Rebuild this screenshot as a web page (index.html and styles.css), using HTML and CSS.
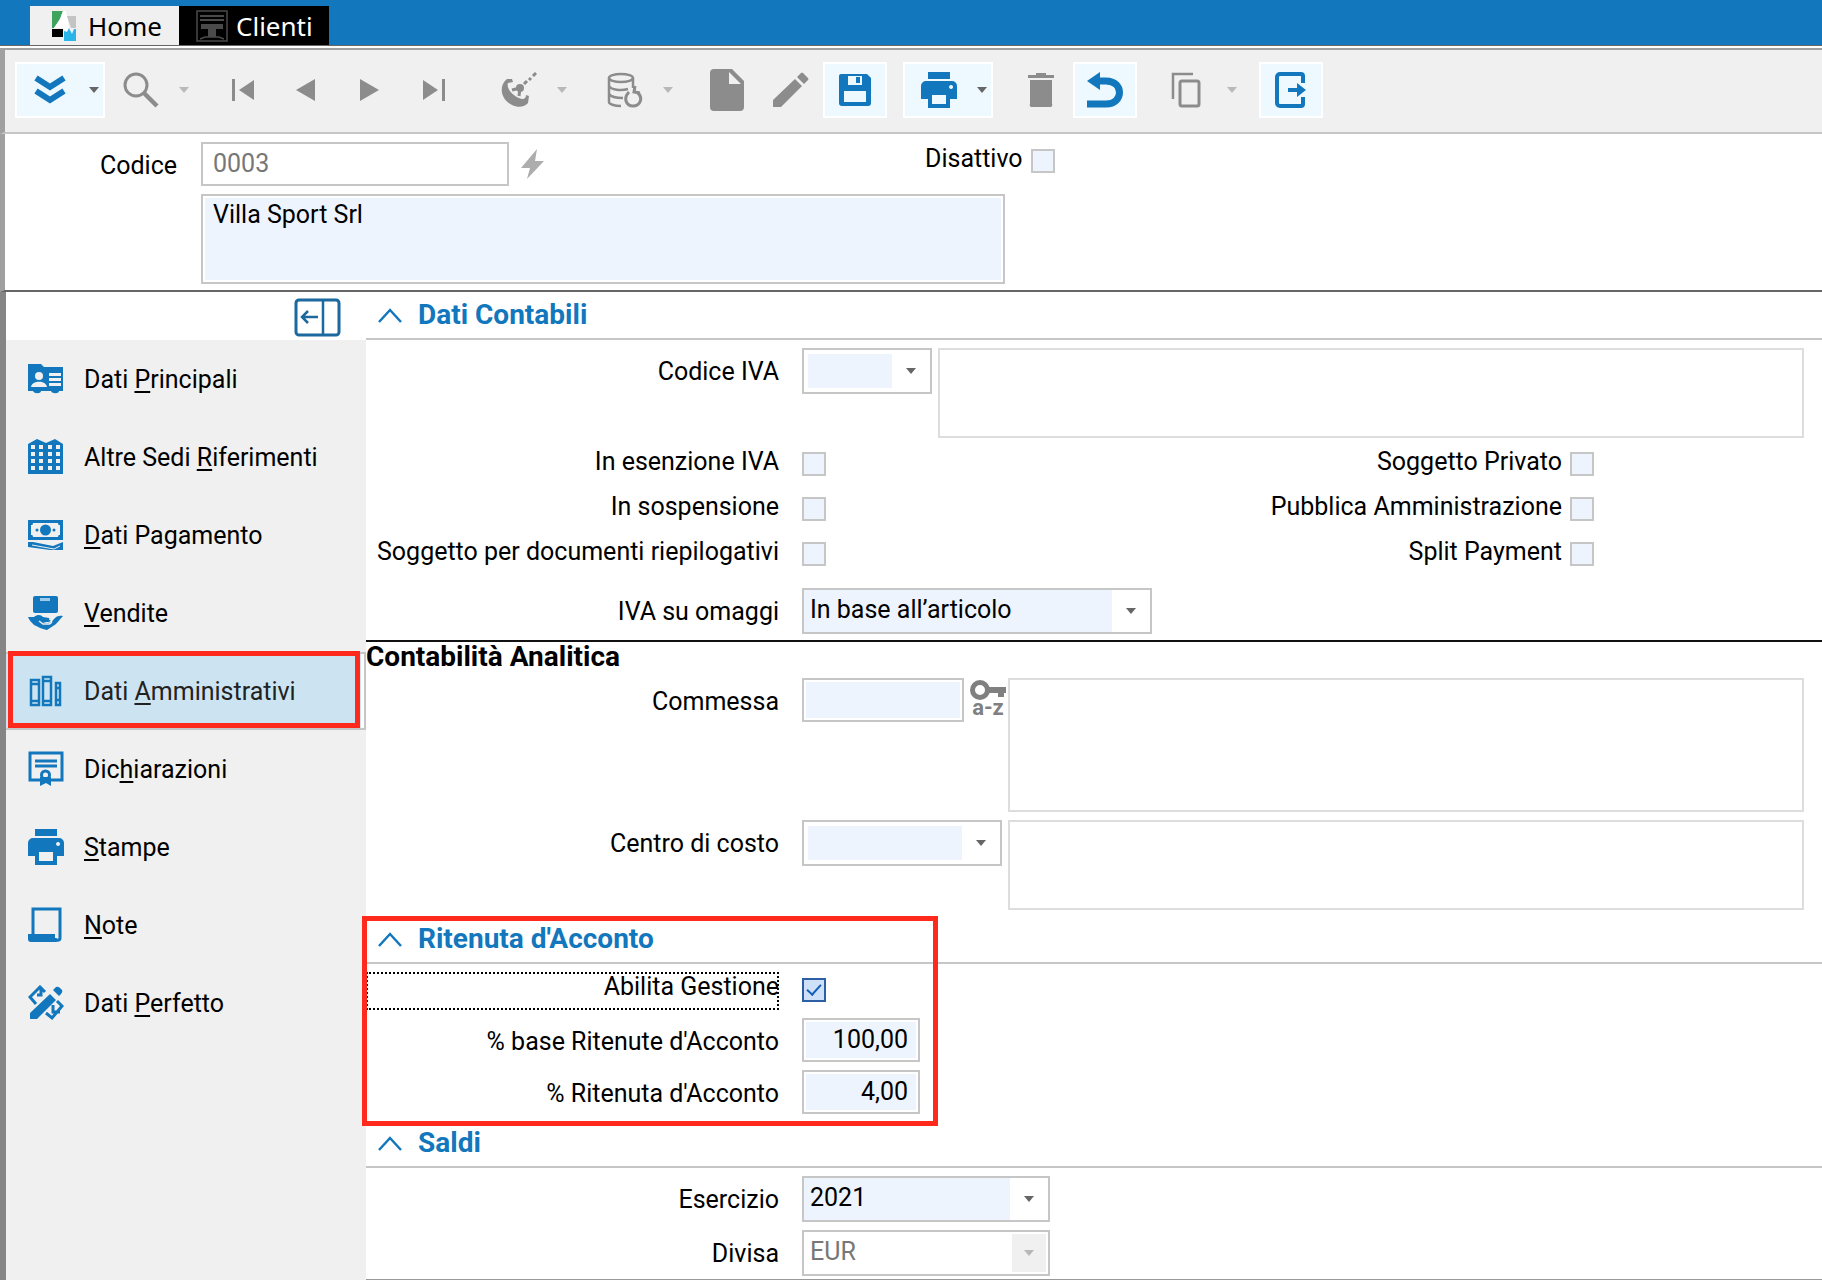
FILE: index.html
```html
<!DOCTYPE html>
<html lang="it">
<head>
  <meta charset="UTF-8">
  <title>Clienti</title>
  <meta name="viewport" content="width=device-width, initial-scale=1.0">
  <link rel="stylesheet" href="styles.css">
</head>
<body>

  <nav class="tabs">
    <a class="tab" href="#home">
      <svg width="24" height="30" viewBox="0 0 24 30">
        <path fill="#3da35d" d="M0 0h11L8 8 2 17H0z"/>
        <path fill="#c4c4c4" d="M15 5h9v12h-5z"/>
        <path fill="#fff" d="M11 0h3l3 17 4 5-4-3-4 1-2-3H2L8 8z"/>
        <path fill="#000" d="M0 18h11v8H0z"/>
        <path fill="#29b5e8" d="M12 20l3 1 2-4 3 6 2-5h2v12H12z"/>
      </svg>
      Home
    </a>
    <a class="tab active" href="#clienti">
      <svg width="32" height="32" viewBox="0 0 32 32" fill="none" stroke="#4a4a4a" stroke-width="1.5">
        <path d="M1 1h30v30H1z"/>
        <path d="M4 6h24M4 10h24" stroke-width="2"/>
        <path d="M5 14h22v5h-7v8h-8v-8H5z" fill="#4a4a4a" stroke="none"/>
        <path d="M4 29l5-2h14l5 2"/>
      </svg>
      Clienti
    </a>
  </nav>

  <div class="toolbar">
    <div class="tool-group">
      <button class="tool wide on" aria-label="Azioni">
        <svg width="34" height="30" viewBox="0 0 34 30" fill="none" stroke="currentColor" stroke-width="6"><path d="M3 3l14 9 14-9M3 16l14 9 14-9"/></svg>
        <span class="caret"></span>
      </button>
      <button class="tool wide" aria-label="Cerca">
        <svg width="36" height="36" viewBox="0 0 36 36" fill="none" stroke="currentColor"><circle cx="13" cy="13" r="11" stroke-width="3"/><path d="M21 21l13 13" stroke-width="4.5"/></svg>
        <span class="caret"></span>
      </button>
    </div>
    <div class="tool-group">
      <button class="tool" aria-label="Primo"><svg width="24" height="24" viewBox="0 0 24 24" fill="currentColor"><path d="M1 1h3v22H1zM23 2v20L8 12z"/></svg></button>
      <button class="tool" aria-label="Precedente"><svg width="24" height="24" viewBox="0 0 24 24" fill="currentColor"><path d="M20 1v22L1 12z"/></svg></button>
      <button class="tool" aria-label="Successivo"><svg width="24" height="24" viewBox="0 0 24 24" fill="currentColor"><path d="M1 1v22l19-11z"/></svg></button>
      <button class="tool" aria-label="Ultimo"><svg width="24" height="24" viewBox="0 0 24 24" fill="currentColor"><path d="M19 1h3v22h-3zM0 2v20l15-10z"/></svg></button>
    </div>
    <div class="tool-group">
      <button class="tool wide" aria-label="Parabola">
        <svg width="36" height="36" viewBox="0 0 36 36" fill="currentColor">
          <path d="M6 7C-3 14 0 28 11 33c6 3 13 2 16-2l1-7-3-1c0 4-3 5-7 3C11 23 5 16 7 11l5-1-1-3z"/>
          <circle cx="19" cy="16" r="4"/>
          <path d="M19 16l-8 2M19 16l-1 8M23 12l3-3M28 8l2-2M32 4l3-3" fill="none" stroke="currentColor" stroke-width="3"/>
        </svg>
        <span class="caret"></span>
      </button>
    </div>
    <div class="tool-group">
      <button class="tool wide" aria-label="Archivio">
        <svg width="36" height="36" viewBox="0 0 36 36" fill="none" stroke="currentColor" stroke-width="2.5">
          <ellipse cx="14" cy="6" rx="12" ry="4"/>
          <path d="M2 6v24c0 2 5 4 12 4M26 6v10M2 14c2 4 12 5 19 3M2 22c2 3 8 4 14 4"/>
          <path d="M22 20c-6 6-3 14 4 14s11-8 4-14M28 14l-1 6 6 1" stroke-width="3"/>
        </svg>
        <span class="caret"></span>
      </button>
    </div>
    <div class="tool-group">
      <button class="tool" aria-label="Nuovo"><svg width="34" height="42" viewBox="0 0 34 42" fill="currentColor"><path fill-rule="evenodd" d="M4 0h18l12 12v26a4 4 0 0 1-4 4H4a4 4 0 0 1-4-4V4a4 4 0 0 1 4-4zM19 3v12h12z"/></svg></button>
      <button class="tool" aria-label="Modifica"><svg width="36" height="36" viewBox="0 0 36 36" fill="currentColor"><path d="M0 28L22 7l7 7L8 35H0zM24 5l4-4q1-1 2 0l5 5q1 1 0 2l-4 4z"/></svg></button>
      <button class="tool on" aria-label="Salva"><svg width="34" height="34" viewBox="0 0 34 34" fill="currentColor"><path fill-rule="evenodd" d="M3 1h26l4 4v25a3 3 0 0 1-3 3H4a3 3 0 0 1-3-3V3a2 2 0 0 1 2-2zM10 3v9h14V3zM6 18v11h22V18zM18 4h4v6h-4z"/></svg></button>
    </div>
    <div class="tool-group">
      <button class="tool wide on" aria-label="Stampa">
        <svg width="36" height="36" viewBox="0 0 36 36" fill="currentColor"><path d="M7 0h22v7H7z"/><path fill-rule="evenodd" d="M5 9h26a5 5 0 0 1 5 5v13h-7v9H7v-9H0V14a5 5 0 0 1 5-5zM11 23v9h14v-9zM30 13a2 2 0 1 0 .1 0z"/></svg>
        <span class="caret"></span>
      </button>
    </div>
    <div class="tool-group">
      <button class="tool" aria-label="Elimina"><svg width="26" height="34" viewBox="0 0 26 34" fill="currentColor"><path d="M0 2h8V0h10v2h8v3H0zM2 7h22v24a2 2 0 0 1-2 3H4a2 2 0 0 1-2-3z"/></svg></button>
      <button class="tool on" aria-label="Annulla"><svg width="36" height="36" viewBox="0 0 36 36"><path fill="currentColor" d="M0 9L13 0v18z"/><path d="M11 9h8c18 0 18 23 0 23H0" fill="none" stroke="currentColor" stroke-width="7"/></svg></button>
    </div>
    <div class="tool-group">
      <button class="tool wide" aria-label="Copia">
        <svg width="30" height="36" viewBox="0 0 30 36" fill="none" stroke="currentColor" stroke-width="3"><path d="M22 2H2v25" stroke-width="2.5"/><rect x="9" y="9" width="19" height="25" rx="2"/></svg>
        <span class="caret"></span>
      </button>
    </div>
    <div class="tool-group">
      <button class="tool on" aria-label="Esci"><svg width="32" height="36" viewBox="0 0 32 36" fill="none" stroke="currentColor" stroke-width="4"><path d="M28 11V4a2 2 0 0 0-2-2H5a3 3 0 0 0-3 3v26a3 3 0 0 0 3 3h21a2 2 0 0 0 2-2v-7"/><path d="M13 18h12"/><path d="M22 11l9 7-9 7z" fill="currentColor" stroke="none"/></svg></button>
    </div>
  </div>

  <div class="customer">
    <label class="customer-label" for="codice">Codice</label>
    <div class="customer-fields">
      <div class="code-row">
        <input class="field code" type="text" id="codice" value="0003">
        <svg class="bolt" width="24" height="30" viewBox="0 0 24 30"><path fill="#adadad" d="M16 0L0 19h9L6 30 23 12h-9z"/></svg>
        <label class="check-label" for="disattivo">Disattivo</label>
        <input type="checkbox" id="disattivo">
      </div>
      <textarea class="field name" aria-label="Ragione sociale">Villa Sport Srl</textarea>
    </div>
  </div>

  <div class="content">
    <aside class="sidebar">
      <button class="collapse" aria-label="Comprimi menu">
        <svg width="48" height="40" viewBox="0 0 48 40" fill="none" stroke="#1b699e" stroke-width="3"><rect x="2" y="2" width="43" height="35" rx="3"/><path d="M29 2v35M24 19H8M14 13l-6 6 6 6" stroke-width="2.5"/></svg>
      </button>
      <a class="item" href="#principali">
        <svg width="36" height="36" viewBox="0 0 36 36"><path fill="currentColor" d="M0 3h13l3 3h19v24h-4c0 3-7 3-8 0H13c0 3-7 3-8 0H0z"/><g fill="#f0f0f0"><circle cx="11" cy="15" r="4"/><path d="M3 26c1-7 15-7 16 0zM21 12h12v3H21zM21 17h12v3H21zM21 22h12v3H21z"/></g></svg>
        <span>Dati <u>P</u>rincipali</span>
      </a>
      <a class="item" href="#sedi">
        <svg width="36" height="36" viewBox="0 0 36 36"><path fill="currentColor" d="M0 5l9-5 9 4 9-4 8 5v30H0z"/><path d="M5 6v28M13 6v28M22 6v28M30 6v28" stroke="#f0f0f0" stroke-width="4" stroke-dasharray="4 3"/></svg>
        <span>Altre Sedi <u>R</u>iferimenti</span>
      </a>
      <a class="item" href="#pagamento">
        <svg width="36" height="36" viewBox="0 0 36 36"><path fill="currentColor" fill-rule="evenodd" d="M0 3h35v20H0zM5 6c0 2-1 2-2 2v10c1 0 2 0 2 2h25c0-2 1-2 2-2V8c-1 0-2 0-2-2z"/><circle cx="17.5" cy="13" r="5.5" fill="currentColor"/><circle cx="9" cy="13" r="1.5" fill="currentColor"/><circle cx="26" cy="13" r="1.5" fill="currentColor"/><path fill="currentColor" d="M0 25h5l20 4 10-4v8H22L0 30z"/><path d="M4 28l22 4 6-3" stroke="#f0f0f0" fill="none"/></svg>
        <span><u>D</u>ati Pagamento</span>
      </a>
      <a class="item" href="#vendite">
        <svg width="36" height="36" viewBox="0 0 36 36"><rect x="5" y="1" width="25" height="17" rx="2" fill="currentColor"/><path fill="#9fcbe6" d="M12 3h10v3H12z"/><path fill="currentColor" d="M0 22h6c4-3 7-2 9 0l6 1c3 1 2 4-1 4h-5c5 2 8 1 11-3 2-3 6-4 9-3-4 4-6 8-10 10l-6 4c-6-1-8-3-13-5-2-2-5-5-6-8z"/><path d="M11 26l4 3h6c4-1 3-5 0-5" fill="none" stroke="#f0f0f0" stroke-width="1.5"/></svg>
        <span><u>V</u>endite</span>
      </a>
      <a class="item active" href="#amministrativi">
        <svg width="36" height="36" viewBox="0 0 36 36" fill="none" stroke="currentColor" stroke-width="2.5"><path d="M3 7h8v25H3zM15 4h8v28h-8zM28 10h4v22h-4z"/><path d="M3 11h8M3 28h8M15 8h8M15 28h8M28 15h4M28 27h4"/></svg>
        <span>Dati <u>A</u>mministrativi</span>
      </a>
      <a class="item" href="#dichiarazioni">
        <svg width="36" height="36" viewBox="0 0 36 36" fill="none" stroke="currentColor" stroke-width="3"><path d="M12 29H2V2h32v27H23M7 10h22M7 15h22"/><circle cx="17.5" cy="24" r="4"/><path fill="currentColor" stroke="none" d="M12 26h11v9l-5-3-6 3z"/><circle cx="17.5" cy="24" r="2" fill="#f0f0f0" stroke="none"/></svg>
        <span>Dic<u>h</u>iarazioni</span>
      </a>
      <a class="item" href="#stampe">
        <svg width="36" height="36" viewBox="0 0 36 36" fill="currentColor"><path d="M7 0h22v7H7z"/><path fill-rule="evenodd" d="M5 9h26a5 5 0 0 1 5 5v13h-7v9H7v-9H0V14a5 5 0 0 1 5-5zM11 23v9h14v-9zM30 13a2 2 0 1 0 .1 0z"/></svg>
        <span><u>S</u>tampe</span>
      </a>
      <a class="item" href="#note">
        <svg width="36" height="36" viewBox="0 0 36 36"><path d="M5 27V2h27v29c0 3-5 3-5 0" fill="none" stroke="currentColor" stroke-width="3"/><path fill="currentColor" d="M0 27h27v4l2 4H3c-2 0-3-1-3-3z"/></svg>
        <span><u>N</u>ote</span>
      </a>
      <a class="item" href="#perfetto">
        <svg width="36" height="36" viewBox="0 0 36 36"><path fill="currentColor" d="M2 28L22 9l6 6L9 34H2zM25 5l3-3q2-1 4 1l2 2q1 2-1 4l-2 2z"/><path d="M8 19l-6-7L12 2l5 5M13 2v8H9M25 20v7h7M29 16l5 5-10 12-6-5" fill="none" stroke="currentColor" stroke-width="3"/></svg>
        <span>Dati <u>P</u>erfetto</span>
      </a>
    </aside>

    <main class="panel">
      <section>
        <h2 class="section-title">
          <svg width="24" height="16" viewBox="0 0 24 16"><path d="M1 15L12 3l11 12" fill="none" stroke="currentColor" stroke-width="2.5"/></svg>
          Dati Contabili
        </h2>
        <div class="section-body">
          <div class="row">
            <label for="iva">Codice IVA</label>
            <div class="combo empty w-iva"><select id="iva"><option></option></select><span class="arrow"></span></div>
            <textarea class="descr short" aria-label="Descrizione IVA" readonly></textarea>
          </div>
          <div class="checks">
            <div class="row check-row">
              <label for="esenzione">In esenzione IVA</label><input type="checkbox" id="esenzione">
              <label class="right" for="privato">Soggetto Privato</label><input type="checkbox" id="privato">
            </div>
            <div class="row check-row">
              <label for="sospensione">In sospensione</label><input type="checkbox" id="sospensione">
              <label class="right" for="pa">Pubblica Amministrazione</label><input type="checkbox" id="pa">
            </div>
            <div class="row check-row">
              <label for="riepilogativi">Soggetto per documenti riepilogativi</label><input type="checkbox" id="riepilogativi">
              <label class="right" for="split">Split Payment</label><input type="checkbox" id="split">
            </div>
          </div>
          <div class="row">
            <label for="omaggi">IVA su omaggi</label>
            <div class="combo w-omaggi"><select id="omaggi"><option>In base all’articolo</option></select><span class="arrow"></span></div>
          </div>
        </div>
      </section>

      <section class="analitica">
        <h3>Contabilità Analitica</h3>
        <div class="row">
          <label for="commessa">Commessa</label>
          <div class="lookup">
            <input class="field w-commessa" type="text" id="commessa">
            <button class="key" aria-label="Cerca commessa">
              <svg width="36" height="20" viewBox="0 0 36 20"><circle cx="10" cy="10" r="7.500" fill="none" stroke="currentColor" stroke-width="5"/><path fill="currentColor" d="M18 7h18v6h-2v4h-6v-4H18z"/></svg>
              <span>a-z</span>
            </button>
          </div>
          <textarea class="descr tall" aria-label="Descrizione commessa" readonly></textarea>
        </div>
        <div class="row">
          <label for="centro">Centro di costo</label>
          <div class="combo empty w-centro"><select id="centro"><option></option></select><span class="arrow"></span></div>
          <textarea class="descr short" aria-label="Descrizione centro di costo" readonly></textarea>
        </div>
      </section>

      <section class="highlight">
        <h2 class="section-title">
          <svg width="24" height="16" viewBox="0 0 24 16"><path d="M1 15L12 3l11 12" fill="none" stroke="currentColor" stroke-width="2.5"/></svg>
          Ritenuta d'Acconto
        </h2>
        <div class="section-body">
          <div class="row">
            <label class="focused" for="abilita">Abilita Gestione</label><input class="lower" type="checkbox" id="abilita" checked>
          </div>
          <div class="row">
            <label for="base">% base Ritenute d'Acconto</label><input class="field number" type="text" id="base" value="100,00">
          </div>
          <div class="row">
            <label for="ritenuta">% Ritenuta d'Acconto</label><input class="field number" type="text" id="ritenuta" value="4,00">
          </div>
        </div>
      </section>

      <section>
        <h2 class="section-title">
          <svg width="24" height="16" viewBox="0 0 24 16"><path d="M1 15L12 3l11 12" fill="none" stroke="currentColor" stroke-width="2.5"/></svg>
          Saldi
        </h2>
        <div class="section-body">
          <div class="row">
            <label for="esercizio">Esercizio</label>
            <div class="combo w-saldi"><select id="esercizio"><option>2021</option></select><span class="arrow"></span></div>
          </div>
          <div class="row">
            <label for="divisa">Divisa</label>
            <div class="combo disabled w-saldi"><select id="divisa" disabled><option>EUR</option></select><span class="arrow"></span></div>
          </div>
        </div>
      </section>
    </main>
  </div>

</body>
</html>
```
FILE: styles.css
```css
:root {
  --blue: #1277bc;
  --field: #edf4fd;
  --line: #c6c6c6;
  --grey: #f0f0f0;
  --icon: #8c8c8c;
  --red: #ff2a1c;
}

*,
*::before,
*::after {
  box-sizing: border-box;
}

body {
  margin: 0;
  min-height: 100vh;
  display: flex;
  flex-direction: column;
  background: #fff;
  color: #000;
  font-family: Roboto, "Liberation Sans", sans-serif;
  font-size: 25px;
  line-height: 30px;
}

input, select, textarea, button {
  font: inherit;
  color: inherit;
  margin: 0;
}

a {
  color: inherit;
  text-decoration: none;
}

svg {
  flex: none;
}

/* tabs */
.tabs {
  display: flex;
  height: 46px;
  padding: 6px 0 0 30px;
  background: var(--blue);
  border-bottom: 1px solid #666;
}

.tab {
  display: flex;
  align-items: center;
  gap: 12px;
  width: 149px;
  padding-left: 22px;
  background: var(--grey);
  font-family: "Noto Sans", sans-serif;
  font-size: 26px;
}

.tab.active {
  gap: 8px;
  width: 150px;
  padding-left: 17px;
  background: #000;
  color: #fff;
}

/* toolbar */
.toolbar {
  display: flex;
  align-items: center;
  gap: 16px;
  margin-top: 2px;
  padding: 12px 10px 14px;
  background: var(--grey);
  border: solid #a0a0a0;
  border-width: 2px 0 2px 5px;
  border-bottom-color: var(--line);
}

.tool-group {
  display: flex;
}

.tool {
  display: flex;
  align-items: center;
  justify-content: center;
  width: 64px;
  height: 56px;
  padding: 0;
  border: 2px solid transparent;
  background: none;
  color: var(--icon);
}

.tool.wide {
  width: 90px;
  justify-content: space-between;
  padding: 0 4px 0 16px;
}

.tool.on {
  background: #edf8ff;
  border-color: #fff;
  color: var(--blue);
}

.caret,
.arrow::after {
  border: solid transparent;
  border-width: 6px 5px 0;
  border-top-color: #b8b8b8;
}

.tool.on .caret {
  border-top-color: #666;
}

/* customer header */
.customer {
  display: flex;
  gap: 24px;
  padding: 8px 0 6px;
  border-left: 5px solid #a0a0a0;
  border-bottom: 2px solid #666;
}

.customer-label {
  width: 172px;
  padding-top: 9px;
  text-align: right;
}

.customer-fields {
  display: flex;
  flex-direction: column;
  gap: 8px;
}

.code-row {
  display: flex;
  align-items: center;
}

.field {
  height: 44px;
  padding: 0 10px 2px;
  border: 2px solid var(--line);
  border-radius: 0;
  background: var(--field);
  box-shadow: inset 0 0 0 2px #fff;
}

.field.code {
  width: 308px;
  background: #fff;
  color: #777;
}

.bolt {
  margin-left: 12px;
}

.check-label {
  margin-left: 380px;
  padding-bottom: 10px;
}

.check-label + input {
  margin: 0 0 6px 8px;
}

.field.name {
  width: 804px;
  height: 90px;
  padding-top: 4px;
  resize: none;
}

input[type="checkbox"] {
  appearance: none;
  display: grid;
  place-items: center;
  flex: none;
  width: 24px;
  height: 24px;
  border: 2px solid var(--line);
  background: var(--field);
}

input[type="checkbox"]:checked {
  border-color: #2c5fa3;
  background: #cfe1f8;
}

input[type="checkbox"]:checked::before {
  content: "";
  width: 8px;
  height: 14px;
  margin-bottom: 4px;
  border: solid #1360b8;
  border-width: 0 2px 2px 0;
  transform: rotate(42deg);
}

/* sidebar */
.content {
  flex: 1;
  display: flex;
  border-left: 6px solid #858585;
}

.sidebar {
  flex: none;
  width: 360px;
  background: var(--grey);
}

.collapse {
  display: flex;
  justify-content: flex-end;
  width: 100%;
  height: 48px;
  padding: 6px 24px 0 0;
  border: 0;
  background: #fff;
}

.item {
  position: relative;
  display: flex;
  align-items: center;
  gap: 20px;
  height: 78px;
  padding-left: 22px;
}

.item svg {
  color: var(--blue);
}

.item span {
  padding-top: 2px;
}

.item u {
  text-underline-offset: 3px;
  text-decoration-thickness: 2px;
  text-decoration-skip-ink: none;
}

.item.active {
  background: #cce4f1;
  border: solid var(--line);
  border-width: 2px 2px 2px 0;
  box-shadow: inset -3px 0 #fff;
  color: #222;
}

.item.active::after {
  content: "";
  position: absolute;
  inset: -3px 4px 0 2px;
  border: 5px solid var(--red);
}

/* form panel */
.panel {
  flex: 1;
  min-width: 0;
  border-bottom: 1px solid #999;
}

.section-title {
  display: flex;
  align-items: center;
  gap: 16px;
  height: 48px;
  margin: 0;
  padding-left: 12px;
  border-bottom: 2px solid var(--line);
  color: var(--blue);
  font-size: 28px;
  font-weight: 700;
}

.section-body {
  padding: 8px 0 6px;
}

.panel section:last-child .section-body {
  padding-bottom: 0;
}

.row {
  display: flex;
  align-items: flex-start;
  padding-right: 18px;
}

.row + .row {
  margin-top: 8px;
}

.row > label:first-child {
  flex: none;
  width: 413px;
  margin-right: 23px;
  padding-top: 9px;
  text-align: right;
}

.checks {
  padding: 3px 0 12px;
}

.row.check-row {
  align-items: center;
  height: 45px;
  margin: 0;
  padding-right: 228px;
}

.row.check-row > label {
  padding: 0 0 4px;
}

.right {
  flex: 1;
  margin-right: 8px;
  text-align: right;
}

.combo {
  display: flex;
  height: 46px;
  border: 2px solid var(--line);
}

.combo select {
  appearance: none;
  flex: 1;
  min-width: 0;
  padding: 0 6px 2px;
  border: 0;
  border-radius: 0;
  background: var(--field);
}

.combo.empty {
  padding: 4px 0 4px 4px;
}

.combo.disabled select {
  background: #fff;
  color: #777;
  opacity: 1;
}

.arrow {
  display: flex;
  align-items: center;
  justify-content: center;
  width: 38px;
}

.arrow::after {
  content: "";
  border-top-color: #666;
}

.disabled .arrow {
  margin: 2px;
  width: 34px;
  background: var(--grey);
}

.disabled .arrow::after {
  border-top-color: #b8b8b8;
}

.w-iva {
  width: 130px;
}

.w-omaggi {
  width: 350px;
}

.w-centro {
  width: 200px;
}

.w-saldi {
  width: 248px;
}

.w-commessa {
  width: 162px;
}

.descr {
  flex: 1;
  margin-left: 6px;
  border: 2px solid #ddd;
  background: #fff;
  resize: none;
}

.descr.short {
  height: 90px;
}

.descr.tall {
  height: 134px;
}

.analitica {
  padding-bottom: 6px;
  border-top: 2px solid #111;
}

.analitica h3 {
  margin: 0 0 6px;
  font-size: 28px;
  line-height: 30px;
}

.lookup {
  display: flex;
  gap: 6px;
  width: 200px;
}

.key {
  display: flex;
  flex-direction: column;
  align-items: center;
  padding: 2px 0 0;
  border: 0;
  background: none;
  color: #808080;
  font-size: 22px;
  font-weight: 700;
  line-height: 16px;
}

.highlight {
  position: relative;
}

/* red frame drawn over the section, a bit wider than its fields */
.highlight::after {
  content: "";
  position: absolute;
  top: 0;
  bottom: -6px;
  left: -4px;
  width: 576px;
  border: 5px solid var(--red);
  pointer-events: none;
}

.row > label.focused {
  height: 38px;
  padding-top: 0;
  outline: 2px dotted #000;
  outline-offset: -2px;
}

.lower {
  margin-top: 6px;
}

.field.number {
  width: 118px;
  text-align: right;
}
```
